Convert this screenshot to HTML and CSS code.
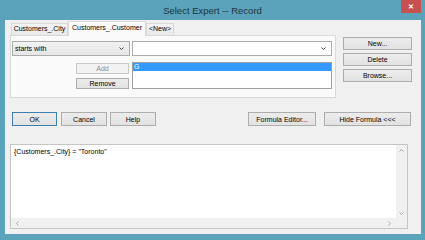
FILE: index.html
```html
<!DOCTYPE html>
<html lang="en">
<head>
  <meta charset="UTF-8">
  <title>Select Expert -- Record</title>
  <link rel="stylesheet" href="styles.css">
</head>
<body>

  <div class="window">
    <div class="titlebar">
      <span class="title">Select Expert -- Record</span>
      <span class="close">&#x2715;</span>
    </div>

    <div class="client">
      <div class="top">
        <div class="tabs">
          <div class="tabstrip">
            <div class="tab tab-city">Customers_.City</div>
            <div class="tab tab-customer active">Customers_.Customer</div>
            <div class="tab tab-new">&lt;New&gt;</div>
          </div>

          <div class="panel">
            <div class="combo combo-grey">
              <span>starts with</span>
              <svg class="chev" width="5" height="3" viewBox="0 0 5 3"><path d="M0.5 0.5 L2.5 2.5 L4.5 0.5" /></svg>
            </div>
            <div class="combo">
              <span></span>
              <svg class="chev" width="5" height="3" viewBox="0 0 5 3"><path d="M0.5 0.5 L2.5 2.5 L4.5 0.5" /></svg>
            </div>

            <div class="list-buttons">
              <button class="btn btn-list" disabled>Add</button>
              <button class="btn btn-list">Remove</button>
            </div>
            <div class="listbox">
              <div class="list-item selected">G</div>
            </div>
          </div>
        </div>

        <div class="side">
          <button class="btn">New...</button>
          <button class="btn">Delete</button>
          <button class="btn">Browse...</button>
        </div>
      </div>

      <div class="actions">
        <button class="btn btn-ok">OK</button>
        <button class="btn btn-cancel">Cancel</button>
        <button class="btn btn-help">Help</button>
        <button class="btn btn-formula">Formula Editor...</button>
        <button class="btn btn-hide">Hide Formula &lt;&lt;&lt;</button>
      </div>

      <div class="formula">
        <div class="formula-text">{Customers_.City} = "Toronto"</div>
        <div class="vscroll">
          <svg class="arrow" width="5" height="3" viewBox="0 0 5 3"><path d="M0.5 2.5 L2.5 0.5 L4.5 2.5" /></svg>
          <svg class="arrow" width="5" height="3" viewBox="0 0 5 3"><path d="M0.5 0.5 L2.5 2.5 L4.5 0.5" /></svg>
        </div>
        <div class="hscroll">
          <svg class="arrow" width="3" height="5" viewBox="0 0 3 5"><path d="M2.5 0.5 L0.5 2.5 L2.5 4.5" /></svg>
          <svg class="arrow" width="3" height="5" viewBox="0 0 3 5"><path d="M0.5 0.5 L2.5 2.5 L0.5 4.5" /></svg>
        </div>
        <div class="corner"></div>
      </div>
    </div>
  </div>

</body>
</html>
```

FILE: styles.css
```css
/* Window frame colours (Windows 8 style) */
:root {
  --frame-color: #5aa3bb;
  --face-color: #f0f0f0;
  --button-border: #adadad;
  --panel-border: #d9d9d9;
  --select-blue: #3399ff;
}

body {
  margin: 0;
  font-family: 'Liberation Sans', Arial, sans-serif;
  font-size: 7px;
  color: #000;
}

.window {
  width: 425px;
  height: 240px;
  background-color: var(--frame-color);
  display: flex;
  flex-direction: column;
}

/* Title bar */
.titlebar {
  height: 20px;
  display: grid;
  grid-template-columns: 1fr auto 1fr;
}

.title {
  grid-column: 2;
  align-self: center;
  font-size: 9.5px;
  color: #1f3440;
  padding-top: 1px;
}

.close {
  grid-column: 3;
  justify-self: end;
  align-self: start;
  width: 20px;
  height: 13px;
  margin-right: 4px;
  background-color: #c75050;
  color: #fff;
  font-size: 7px;
  font-weight: bold;
  line-height: 13px;
  text-align: center;
}

/* Client area */
.client {
  height: 214px;
  margin: 0 4px 6px 5px;
  background-color: var(--face-color);
  box-sizing: border-box;
}

.top {
  display: flex;
  padding-left: 5px;
}

.tabs {
  width: 326px;
  margin-top: 1px;
}

.tabstrip {
  display: flex;
  align-items: flex-end;
  height: 14px;
  padding-left: 1px;
}

.tab {
  height: 12px;
  box-sizing: border-box;
  border: 1px solid var(--panel-border);
  border-bottom: none;
  background: linear-gradient(#f3f3f3, #e9e9e9);
  line-height: 10px;
  text-align: center;
  white-space: nowrap;
}

.tab-city { width: 57px; }
.tab-customer { width: 78px; }
.tab-new { width: 28px; }

.tab.active {
  height: 15px;
  margin-bottom: -1px;
  background: #fafafa;
  line-height: 12px;
  position: relative;
  z-index: 1;
}

.panel {
  height: 63px;
  box-sizing: border-box;
  border: 1px solid var(--panel-border);
  background-color: #fafafa;
  padding: 5px 3px 0 1px;
  display: grid;
  grid-template-columns: 118px 200px;
  grid-template-rows: 15px 27px;
  column-gap: 2px;
  row-gap: 6px;
}

.combo {
  display: flex;
  align-items: center;
  justify-content: space-between;
  box-sizing: border-box;
  border: 1px solid #acacac;
  background-color: #fff;
  padding: 0 5px 0 2px;
}

.combo-grey {
  background: linear-gradient(#f2f2f2, #e6e6e6);
}

.chev path,
.arrow path {
  fill: none;
  stroke: #444;
  stroke-width: 1;
}

.list-buttons {
  display: flex;
  flex-direction: column;
  align-items: flex-end;
  gap: 4px;
  padding-top: 1px;
  padding-right: 1px;
}

.listbox {
  box-sizing: border-box;
  border: 1px solid #a0a0a0;
  background-color: #fff;
  padding: 0;
}

.list-item {
  height: 8px;
  line-height: 8px;
  padding-left: 1px;
}

.list-item.selected {
  background-color: var(--select-blue);
  color: #fff;
}

/* Buttons */
.btn {
  font-family: inherit;
  font-size: 7px;
  color: #000;
  margin: 0;
  padding: 0;
  height: 13px;
  box-sizing: border-box;
  border: 1px solid var(--button-border);
  background: linear-gradient(#ececec, #e2e2e2);
  border-radius: 0;
}

.btn-list {
  width: 53px;
  height: 12px;
}

.btn:disabled {
  color: #8d8d8d;
  border-color: #c8c8c8;
  background: #f2f2f2;
}

.side {
  display: flex;
  flex-direction: column;
  gap: 3px;
  width: 69px;
  margin-left: 7px;
  margin-top: 17px;
}

.actions {
  display: flex;
  gap: 4px;
  margin-top: 14px;
  padding: 0 10px 0 7px;
}

.actions .btn {
  height: 14px;
}

.btn-ok {
  width: 45px;
  border-color: #3c7fb1;
}

.btn-cancel { width: 46px; }
.btn-help { width: 46px; margin-left: -1px; }

.btn-formula {
  width: 68px;
  margin-left: auto;
}

.btn-hide {
  width: 87px;
  margin-left: 4px;
}

/* Formula box */
.formula {
  width: 398px;
  height: 85px;
  margin: 18px 0 0 5px;
  box-sizing: border-box;
  border: 1px solid #c5c5c5;
  background-color: #fff;
  display: grid;
  grid-template-columns: 1fr 11px;
  grid-template-rows: 1fr 10px;
}

.formula-text {
  padding: 3px 3px;
  white-space: nowrap;
}

.vscroll,
.hscroll,
.corner {
  background-color: var(--face-color);
}

.vscroll {
  display: flex;
  flex-direction: column;
  align-items: center;
  justify-content: space-between;
  padding: 4px 0 3px;
}

.hscroll {
  display: flex;
  align-items: center;
  justify-content: space-between;
  padding: 0 5px;
}

.arrow path {
  stroke: #a6a6a6;
}
```
